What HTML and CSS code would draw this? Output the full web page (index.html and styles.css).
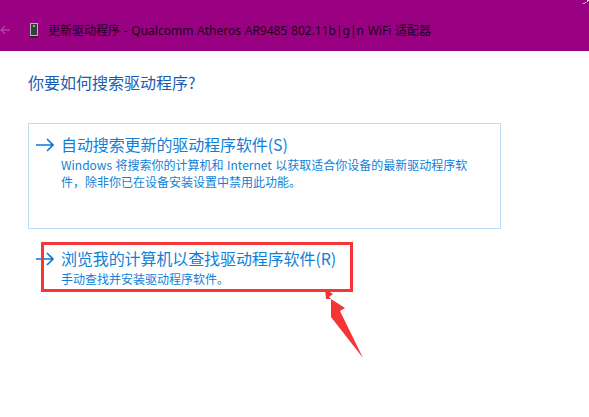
FILE: index.html
```html
<!DOCTYPE html>
<html lang="zh-CN">
<head>
<meta charset="utf-8">
<title>更新驱动程序</title>
<link rel="stylesheet" href="styles.css">
</head>
<body>
<header class="titlebar">
  <svg class="back" width="10" height="10" viewBox="0 0 10 10"><path d="M5 1 1 5l4 4M1 5h9" fill="none" stroke="#b3459f" stroke-width="1.3"/></svg>
  <svg class="device" width="9" height="15" viewBox="0 0 9 15"><rect x="0.5" y="0.5" width="7" height="12" fill="#3c3c3c" stroke="#b4b4b4"/><rect x="3" y="2" width="2" height="2" fill="#20f040"/><rect x="0" y="13" width="8" height="1.5" fill="#222"/></svg>
  <span class="titletext">更新驱动程序 - Qualcomm Atheros AR9485 802.11b|g|n WiFi 适配器</span>
  <svg class="corner" width="7" height="4" viewBox="0 0 7 4"><path d="M0 4 4 2h1V0h2v1H6v1H5L2 4z" fill="#f0d8ec"/></svg>
</header>
<main class="content">
  <h1 class="question">你要如何搜索驱动程序?</h1>
  <section class="option option-boxed">
    <svg class="arrow" width="18" height="14" viewBox="0 0 18 14"><path d="M0 7h17M11 1l6 6-6 6" fill="none" stroke="#0a78d7" stroke-width="1.6"/></svg>
    <div class="option-body">
      <div class="option-title">自动搜索更新的驱动程序软件(S)</div>
      <p class="option-desc">Windows 将搜索你的计算机和 Internet 以获取适合你设备的最新驱动程序软件，除非你已在设备安装设置中禁用此功能。</p>
    </div>
  </section>
  <section class="option option-plain">
    <svg class="arrow" width="18" height="14" viewBox="0 0 18 14"><path d="M0 7h17M11 1l6 6-6 6" fill="none" stroke="#0a78d7" stroke-width="1.6"/></svg>
    <div class="option-body">
      <div class="option-title">浏览我的计算机以查找驱动程序软件(R)</div>
      <p class="option-desc">手动查找并安装驱动程序软件。</p>
    </div>
  </section>
</main>
<div class="highlight"></div>
<svg class="callout" width="50" height="72" viewBox="0 0 50 72"><polygon points="5,0 13,5 9,8 11,10 25,19 20,22 43,69 11,28 11,10 6,10" fill="#f53535"/></svg>
</body>
</html>
```
FILE: styles.css
```css
html, body { margin: 0; padding: 0; background: #fff; }
body {
  width: 589px;
  height: 417px;
  overflow: hidden;
  position: relative;
  font-family: "Noto Sans CJK SC", "Liberation Sans", sans-serif;
}
.titlebar {
  height: 51px;
  background: #9a0082;
  display: flex;
  align-items: center;
  padding: 9px 0 0 0;
  box-sizing: border-box;
}
.back { flex: none; }
.device { margin-left: 20px; flex: none; }
.titletext {
  margin-left: 9px;
  font-size: 12px;
  color: #1a0016;
  white-space: nowrap;
  word-spacing: 0.6px;
  font-family: "Noto Sans", "Noto Sans CJK SC", sans-serif;
}
.corner { position: absolute; right: 0; top: 0; }
.content { padding: 0 0 0 28px; }
.question {
  margin: 18px 0 0;
  font-size: 16px;
  line-height: 26px;
  font-weight: 400;
  color: #1a5cb0;
}
.option { display: flex; box-sizing: border-box; }
.option-boxed {
  margin-top: 28px;
  width: 473px;
  height: 106px;
  border: 1px solid #bcdcf2;
  padding: 8px 20px 0 7px;
}
.option-plain { margin-top: 9px; width: 473px; padding: 8px 20px 0 8px; }
.arrow { flex: none; margin-top: 6px; margin-right: 7px; }
.option-body { flex: 1; min-width: 0; }
.option-title { font-size: 16px; line-height: 24px; color: #0f7fd8; white-space: nowrap; letter-spacing: -0.1px; }
.option-desc { margin: 0; font-size: 12px; line-height: 17px; color: #0f7fd8; word-spacing: 0.8px; }
.highlight {
  position: absolute;
  left: 41px;
  top: 242px;
  width: 312px;
  height: 50px;
  box-sizing: border-box;
  border: 3px solid #f63636;
}
.callout { position: absolute; left: 320px; top: 289px; }
```
